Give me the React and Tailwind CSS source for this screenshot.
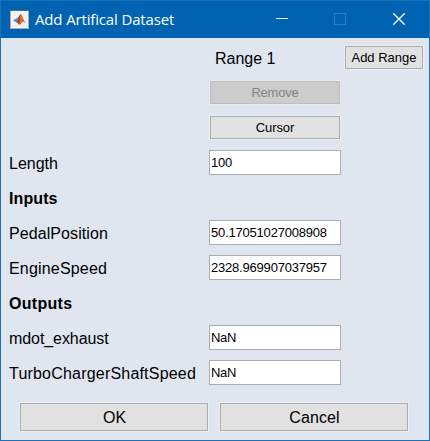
function Button({ children, className = "", textClass = "text-[13px]", disabled = false }) {
  return (
    <button
      disabled={disabled}
      className={`flex border ${disabled ? "border-[#e7ebf1] bg-[#bfbfbf] text-[#838383]" : "border-[#ebeef3] bg-[#adadad] text-black"} p-px ${className}`}
    >
      <span
        className={`flex h-full w-full items-center justify-center whitespace-nowrap ${disabled ? "bg-[#cccccc]" : "bg-[#e1e1e1]"} ${textClass}`}
      >
        {children}
      </span>
    </button>
  );
}

function Field({ value, textClass = "" }) {
  return (
    <div className="flex h-[25px] w-[132px] items-center border border-[#abadb3] bg-white pl-px text-[13px] leading-[15px] text-black">
      <span className={textClass}>{value}</span>
    </div>
  );
}

function Row({ label, bold = false, labelClass = "", children }) {
  return (
    <div className="flex h-[25px] items-center">
      <div className={`w-[200px] shrink-0 whitespace-nowrap pt-0.5 text-base leading-5 ${bold ? "font-bold" : ""} ${labelClass}`}>
        {label}
      </div>
      {children}
    </div>
  );
}

function MatlabIcon() {
  return (
    <svg width="20" height="19" viewBox="0 0 20 19" className="shrink-0">
      <rect x="0.5" y="0.5" width="18" height="18" fill="#f3f3f3" stroke="#a9afb6" />
      <path d="M0 .5h19" stroke="#536b84" strokeWidth="1" />
      <g transform="translate(0.9 0.6) scale(0.88 0.86)">
        <path d="M2.3 11.1 6.8 9l2.3 2.1-2.8 2.7z" fill="#4a8fd0" />
        <path d="M6.8 9c1.8-.4 2.5-3.7 4.4-5L9.1 11.1z" fill="#3a6a9a" />
        <path d="M11.2 4c-1.2 2.2-2 6.9-4.9 9.8 1.4-.4 2.2 1.8 3 2.7 2-.5 2.6-3.9 4.2-3.8-.6-2.5-1.3-7.4-2.3-8.7z" fill="#b5331c" />
        <path d="M11.2 4c1.6 1.3 3.2 7.1 5.6 10.7-1.4-1.3-2.5-2.1-3.7-1.8-1.6.2-2.3 3.1-3.8 3.6C10.2 12.8 9.8 8 11.2 4z" fill="#e8662b" />
        <path d="M11.3 5c.9 3.1.9 6-.2 8.9 1-1.3 1.5-6.1.2-8.9z" fill="#f8ba68" />
      </g>
    </svg>
  );
}

export default function App() {
  return (
    <div className="flex h-[441px] w-[430px] flex-col border border-[#1a73ba] bg-[#dfe6f0] font-['Liberation_Sans',Arial,sans-serif] text-black">
      <header className="flex h-[37px] shrink-0 items-center bg-[#0063b1] pb-px pl-[9px] text-white">
        <MatlabIcon />
        <h1 className="ml-[5px] whitespace-nowrap font-['Open_Sans','Noto_Sans',sans-serif] text-[15px] leading-5 tracking-[-0.15px]">
          Add Artifical Dataset
        </h1>
        <div className="ml-auto flex items-center pr-6">
          <svg width="12" height="12" viewBox="0 0 12 12" shapeRendering="crispEdges" className="mr-[46px]">
            <path d="M0 5.5h12" stroke="white" />
          </svg>
          <svg width="12" height="12" viewBox="0 0 12 12" shapeRendering="crispEdges" className="mr-[47px]">
            <path d="M.5.5h11v11H.5z" fill="none" stroke="#2d80c0" />
          </svg>
          <svg width="12" height="12" viewBox="0 0 12 12">
            <path d="m.3.3 11.4 11.4M11.7.3.3 11.7" stroke="white" strokeWidth="1.3" />
          </svg>
        </div>
      </header>

      <main className="flex flex-col gap-2.5 pl-2 pt-[7px]">
        <div className="flex h-[25px] items-center">
          <div className="pl-[206px] pt-0.5 text-base leading-5">Range 1</div>
          <Button className="ml-auto mr-[5px] h-[25px] w-[80px]">Add Range</Button>
        </div>
        <Row>
          <Button disabled className="h-[25px] w-[132px]" textClass="text-[13px] tracking-[-0.2px]">Remove</Button>
        </Row>
        <Row>
          <Button className="h-[25px] w-[132px]" textClass="text-[13px] tracking-[-0.1px]">Cursor</Button>
        </Row>
        <Row label="Length"><Field value="100" textClass="tracking-[-0.2px]" /></Row>
        <Row label="Inputs" bold labelClass="tracking-[0.1px]" />
        <Row label="PedalPosition" labelClass="tracking-[0.08px]"><Field value="50.17051027008908" textClass="tracking-[-0.2px]" /></Row>
        <Row label="EngineSpeed" labelClass="tracking-[0.18px]"><Field value="2328.969907037957" textClass="tracking-[-0.2px]" /></Row>
        <Row label="Outputs" bold labelClass="tracking-[0.3px]" />
        <Row label="mdot_exhaust" labelClass="tracking-[-0.08px]"><Field value="NaN" textClass="tracking-[-0.3px]" /></Row>
        <Row label="TurboChargerShaftSpeed" labelClass="tracking-[0.2px]"><Field value="NaN" textClass="tracking-[-0.3px]" /></Row>
      </main>

      <footer className="mt-[17px] flex gap-2.5 pl-[18px]">
        <Button className="h-[30px] w-[190px]" textClass="pl-px pt-0.5 text-base">OK</Button>
        <Button className="h-[30px] w-[190px]" textClass="pl-px pt-0.5 text-base tracking-[0.1px]">Cancel</Button>
      </footer>
    </div>
  );
}
